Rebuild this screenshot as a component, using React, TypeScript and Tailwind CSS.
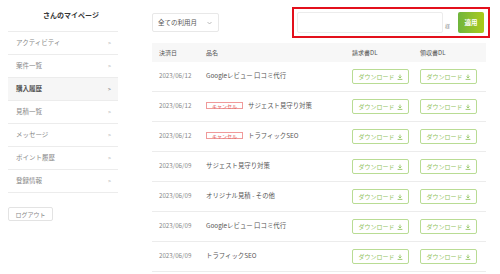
import React from 'react';

const menu = [
  { label: 'アクティビティ' },
  { label: '案件一覧' },
  { label: '購入履歴', active: true },
  { label: '見積一覧' },
  { label: 'メッセージ' },
  { label: 'ポイント履歴' },
  { label: '登録情報' },
];

const rows = [
  { date: '2023/06/12', name: 'Googleレビュー 口コミ代行' },
  { date: '2023/06/12', name: 'サジェスト見守り対策', cancel: true },
  { date: '2023/06/12', name: 'トラフィックSEO', cancel: true },
  { date: '2023/06/09', name: 'サジェスト見守り対策' },
  { date: '2023/06/09', name: 'オリジナル見積 - その他' },
  { date: '2023/06/09', name: 'Googleレビュー 口コミ代行' },
  { date: '2023/06/09', name: 'トラフィックSEO' },
];

const DownloadIcon = () => (
  <svg width="6" height="6" viewBox="0 0 10 10" fill="none" stroke="currentColor" strokeWidth="1.4">
    <path d="M5 1v5.5M2.5 4.2 5 6.7l2.5-2.5M1 9h8" />
  </svg>
);

const DownloadButton = ({ className = '' }: { className?: string }) => (
  <button
    className={`flex h-[15px] w-[57px] items-center justify-center gap-[2px] rounded-[2px] border border-[#b9dc94] bg-white text-[6px] text-[#8fc35c] ${className}`}
  >
    ダウンロード
    <DownloadIcon />
  </button>
);

const App = () => {
  return (
    <div
      className="flex h-[274px] w-[500px] bg-white text-[#555]"
      style={{ fontFamily: '"Noto Sans CJK JP", "Noto Sans", sans-serif' }}
    >
      {/* Sidebar */}
      <aside className="ml-[8px] w-[110px] shrink-0">
        <h2 className="flex h-[31px] items-center justify-center pb-[1px] pl-[16px] text-[7px] font-bold text-[#333]">
          さんのマイページ
        </h2>
        <ul className="border-t border-[#ececec]">
          {menu.map(item => (
            <li
              key={item.label}
              className={`flex h-[23px] items-center justify-between border-b border-[#ececec] pl-[8px] pr-[7px] text-[6.5px] ${
                item.active ? 'bg-[#f6f6f6] font-bold text-[#555]' : 'text-[#888]'
              }`}
            >
              <span>{item.label}</span>
              <span className="text-[5px] text-[#999]">&gt;</span>
            </li>
          ))}
        </ul>
        <button className="mt-[14px] flex h-[14px] w-[45px] items-center justify-center rounded-[2px] border border-[#e3e3e3] text-[6px] text-[#888]">
          ログアウト
        </button>
      </aside>

      {/* Main */}
      <main className="ml-[34px] w-[334px] pt-[7px]">
        <div className="flex h-[31px] items-center justify-between">
          <div className="flex h-[19px] w-[67px] items-center justify-between rounded-[2px] border border-[#e8e8e8] pl-[5px] pr-[6px] text-[6.5px] text-[#555]">
            <span>全ての利用月</span>
            <svg width="5" height="4" viewBox="0 0 10 6" fill="none" stroke="#999" strokeWidth="1.3">
              <path d="M1 1l4 4 4-4" />
            </svg>
          </div>
          <div className="mr-[-4px] flex h-[31px] w-[198px] items-center border-2 border-[#e3101c] pl-[3px] pr-[4px]">
            <div className="h-[21px] w-[146px] rounded-[2px] border border-[#ececec]" />
            <span className="ml-[2px] mt-[6px] text-[5px] text-[#888]">様</span>
            <button className="ml-[8px] flex h-[21px] w-[26px] items-center justify-center rounded-[2px] bg-gradient-to-r from-[#6fb53c] to-[#a9ca14] text-[6.5px] font-bold text-white">
              適用
            </button>
          </div>
        </div>

        <div className="mt-[5px]">
          <div className="grid h-[19px] grid-cols-[47px_146px_68px_57px] items-center bg-[#f7f7f7] pl-[7px] text-[6px] text-[#555]">
            <span>決済日</span>
            <span>品名</span>
            <span>請求書DL</span>
            <span>領収書DL</span>
          </div>
          {rows.map((row, i) => (
            <div
              key={i}
              className="grid h-[30px] grid-cols-[47px_146px_68px_57px] items-center border-b border-[#ececec] pl-[7px]"
            >
              <span className="pb-[2px] text-[6.2px] text-[#888]">{row.date}</span>
              <span className="flex items-center pb-[2px] text-[6.4px] text-[#555]">
                {row.cancel && (
                  <span className="mr-[5px] flex h-[7px] w-[37px] items-center justify-center border border-[#f09a9a] text-[5px] leading-none text-[#e05555]">
                    キャンセル
                  </span>
                )}
                {row.name}
              </span>
              <DownloadButton />
              <DownloadButton className="w-[56px]" />
            </div>
          ))}
        </div>
      </main>
    </div>
  );
};

export default App;
